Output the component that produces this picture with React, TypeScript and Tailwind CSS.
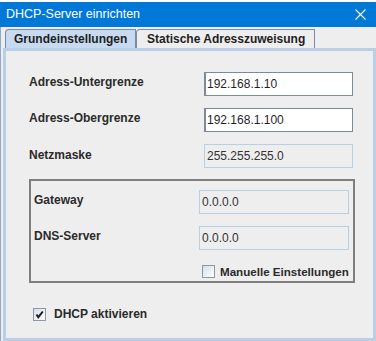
import React from 'react'

const font = "font-['Liberation_Sans','Arial',sans-serif]"

function Field({ value, disabled, width }: { value: string; disabled?: boolean; width: string }) {
  return (
    <div
      className={
        disabled
          ? `${width} h-[24px] flex items-center pl-[2px] border border-[#b8cfe5] text-[12px] text-[#333333]`
          : `${width} h-[24px] flex items-center pl-[1px] bg-white border border-[#7d8b99] border-l-2 text-[12px] text-[#1f1f2a]`
      }
    >
      {value}
    </div>
  )
}

function Checkbox({ checked }: { checked?: boolean }) {
  return (
    <div className="w-[13px] h-[13px] shrink-0 border border-[#8a98a8] bg-gradient-to-br from-[#d9dee4] to-white">
      {checked && (
        <svg width="11" height="11" viewBox="0 0 11 11">
          <path d="M2.5 5.5 L4.3 8.2 L8.8 2.5" fill="none" stroke="#1e1e1e" strokeWidth="2" />
        </svg>
      )}
    </div>
  )
}

export default function App() {
  return (
    <div className={`w-[376px] h-[341px] bg-[#eeeeee] flex flex-col overflow-hidden ${font}`}>
      <div className="h-[2px] bg-white shrink-0" />
      {/* title bar */}
      <div className="h-[25px] shrink-0 bg-[#0078d7] flex items-center justify-between pl-[6px] pr-[10px]">
        <span className="text-white text-[12.5px] leading-none">DHCP-Server einrichten</span>
        <svg width="11" height="11" viewBox="0 0 11 11">
          <path d="M0.5 0.5 L10.5 10.5 M10.5 0.5 L0.5 10.5" stroke="white" strokeWidth="1.1" />
        </svg>
      </div>

      <div className="flex-1 flex flex-col border-l border-[#8ea9cc]">
        {/* tabs */}
        <div className="h-[21px] shrink-0 flex items-end pl-[4px]">
          <div className="w-[131px] h-[19px] flex items-center pl-[8px] bg-[#c7daf0] border-t border-l border-r border-[#7c8ca6] rounded-tl-[4px] text-[12px] font-bold text-[#1e1e1e]">
            Grundeinstellungen
          </div>
          <div className="w-[179px] h-[19px] flex items-center pl-[10px] bg-[#eeeeee] border-t border-l border-r border-[#7c8ca6] rounded-tl-[4px] text-[12px] font-bold text-[#1e1e1e]">
            Statische Adresszuweisung
          </div>
        </div>

        {/* panel */}
        <div className="flex-1 ml-[2px] border-[3px] border-[#b8cfe5] flex flex-col pt-[21px] pl-[23px]">
          <div className="flex flex-col gap-[12px]">
            <div className="flex items-start">
              <div className="w-[175px] pt-[1px] text-[12px] font-bold text-[#2a2a2a]">Adress-Untergrenze</div>
              <Field value="192.168.1.10" width="w-[149px]" />
            </div>
            <div className="flex items-start">
              <div className="w-[175px] pt-[1px] text-[12px] font-bold text-[#2a2a2a]">Adress-Obergrenze</div>
              <Field value="192.168.1.100" width="w-[149px]" />
            </div>
            <div className="flex items-start">
              <div className="w-[175px] pt-[2px] text-[12px] font-bold text-[#2a2a2a]">Netzmaske</div>
              <Field value="255.255.255.0" disabled width="w-[149px]" />
            </div>
          </div>

          {/* group box */}
          <div className="mt-[11px] w-[326px] h-[104px] border-2 border-[#7f7f7f] flex flex-col pt-[9px] pl-[3px]">
            <div className="flex flex-col gap-[12px]">
              <div className="flex items-start">
                <div className="w-[165px] pt-[1px] text-[12px] font-bold text-[#2a2a2a]">Gateway</div>
                <Field value="0.0.0.0" disabled width="w-[150px]" />
              </div>
              <div className="flex items-start">
                <div className="w-[165px] pt-[1px] text-[12px] font-bold text-[#2a2a2a]">DNS-Server</div>
                <Field value="0.0.0.0" disabled width="w-[150px]" />
              </div>
            </div>
            <div className="mt-[13px] flex items-center gap-[5px] pl-[168px]">
              <Checkbox />
              <span className="text-[11.6px] font-bold text-[#2a2a2a] whitespace-nowrap">Manuelle Einstellungen</span>
            </div>
          </div>

          {/* DHCP aktivieren */}
          <div className="mt-[22px] flex items-center gap-[8px] pl-[4px]">
            <Checkbox checked />
            <span className="text-[12px] font-bold text-[#2a2a2a]">DHCP aktivieren</span>
          </div>
        </div>
      </div>
    </div>
  )
}
